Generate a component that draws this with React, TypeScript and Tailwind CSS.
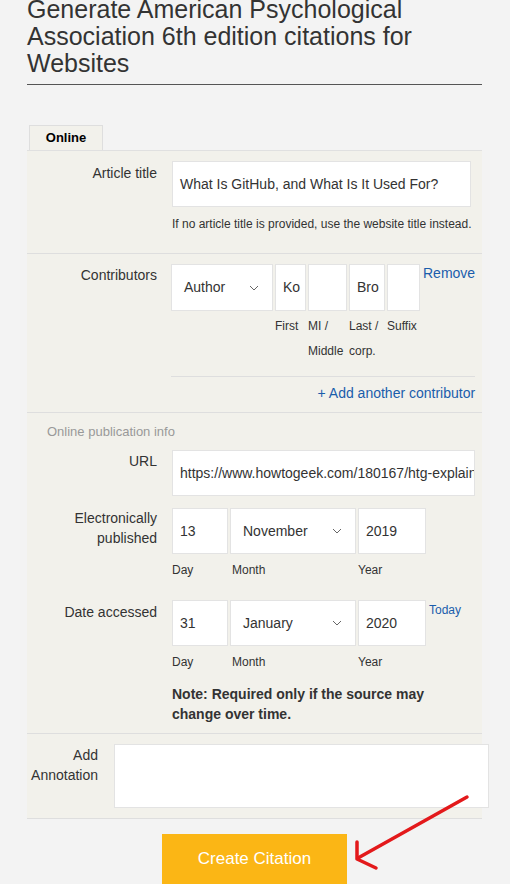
import React from 'react';

const Chevron: React.FC = () => (
  <svg width="10" height="6" viewBox="0 0 10 6" className="shrink-0">
    <path d="M1 1l4 4 4-4" fill="none" stroke="#666" strokeWidth="1" />
  </svg>
);

const Field: React.FC<{ value?: string; className: string }> = ({ value, className }) => (
  <div className={`bg-white border border-[#e3e3e3] flex items-center px-[7px] text-[14px] text-[#333] overflow-hidden whitespace-nowrap ${className}`}>
    {value}
  </div>
);

const Select: React.FC<{ value: string; className: string }> = ({ value, className }) => (
  <div className={`bg-white border border-[#e3e3e3] flex items-center justify-between pl-[12px] pr-[13px] text-[14px] text-[#333] ${className}`}>
    <span>{value}</span>
    <Chevron />
  </div>
);

const DateRow: React.FC<{ day: string; month: string; year: string }> = ({ day, month, year }) => (
  <div>
    <div className="flex gap-[2px] h-[46px]">
      <Field value={day} className="w-[56px] h-full" />
      <Select value={month} className="w-[126px] h-full" />
      <Field value={year} className="w-[68px] h-full" />
    </div>
    <div className="flex gap-[2px] pt-[4px] text-[12px] leading-[25px] text-[#333]">
      <span className="w-[56px]">Day</span>
      <span className="w-[126px] pl-[2px]">Month</span>
      <span className="w-[68px]">Year</span>
    </div>
  </div>
);

const Label: React.FC<{ children: React.ReactNode }> = ({ children }) => (
  <div className="w-[130px] shrink-0 text-right text-[14px] leading-[20px] text-[#333]">{children}</div>
);

const contributorFields = [
  { v: 'Ko', w: 'w-[31px]', l: 'First' },
  { v: '', w: 'w-[39px]', l: 'MI / Middle' },
  { v: 'Bro', w: 'w-[36px]', l: 'Last / corp.' },
  { v: '', w: 'w-[33px]', l: 'Suffix' },
];

export default function App() {
  return (
    <div className="min-h-screen bg-white" style={{ fontFamily: '"Liberation Sans", Arial, sans-serif' }}>
      <div className="w-[510px] min-h-[884px] bg-[#f3f3f3] relative overflow-hidden">
        <div className="pl-[27px] w-[455px] box-content">
          <h1 className="-mt-[4px] text-[25px] leading-[27px] text-[#333] pb-[7px] border-b border-[#555]">
            Generate American Psychological Association 6th edition citations for Websites
          </h1>

          <div className="mt-[40px] flex">
            <div className="ml-[2px] w-[74px] h-[25px] bg-[#f2f1eb] border border-b-0 border-[#dedede] flex items-center justify-center text-[13px] font-bold text-black">
              Online
            </div>
          </div>

          <div className="bg-[#f2f1eb] border-t border-[#e0e0e0] w-[455px] relative">
            {/* Article title */}
            <div className="flex gap-[15px] pt-[10px] pb-[21px] border-b border-[#dedede]">
              <div className="pt-[2px]"><Label>Article title</Label></div>
              <div>
                <Field value="What Is GitHub, and What Is It Used For?" className="w-[299px] h-[46px]" />
                <div className="mt-[10px] text-[12px] leading-[15px] text-[#333]">
                  If no article title is provided, use the website title instead.
                </div>
              </div>
            </div>

            {/* Contributors */}
            <div className="flex gap-[14px] pt-[10px] pb-[9px] border-b border-[#dedede]">
              <div className="pt-[1px]"><Label>Contributors</Label></div>
              <div className="flex-1 pr-[7px]">
                <div className="flex gap-[2px]">
                  <Select value="Author" className="w-[102px] h-[47px]" />
                  {contributorFields.map((c, i) => (
                    <div key={i} className={c.w}>
                      <Field value={c.v} className="w-full h-[47px]" />
                      <div className="text-[12px] leading-[25px] text-[#333] pt-[3px]">{c.l}</div>
                    </div>
                  ))}
                  <a className="ml-[1px] text-[14px] leading-[20px] text-[#1a5dab] -mt-[1px]">Remove</a>
                </div>
                <div className="mt-[12px] border-t border-[#dedede] pt-[6px] text-right text-[14px] leading-[20px] text-[#1a5dab]">
                  + Add another contributor
                </div>
              </div>
            </div>

            {/* Online publication info */}
            <div className="pt-[11px] pb-[9px] border-b border-[#dedede]">
              <div className="pl-[20px] text-[13px] leading-[16px] text-[#999]">Online publication info</div>
              <div className="flex gap-[15px] mt-[10px]">
                <div className="pt-[1px]"><Label>URL</Label></div>
                <Field value="https://www.howtogeek.com/180167/htg-explaining-what-is-github" className="w-[303px] h-[46px]" />
              </div>
              <div className="flex gap-[15px] mt-[12px]">
                <Label>Electronically<br />published</Label>
                <DateRow day="13" month="November" year="2019" />
              </div>
              <div className="flex gap-[15px] mt-[17px]">
                <div className="pt-[2px]"><Label>Date accessed</Label></div>
                <div>
                  <div className="flex">
                    <DateRow day="31" month="January" year="2020" />
                    <a className="ml-[3px] text-[12px] leading-[20px] text-[#1a5dab]">Today</a>
                  </div>
                  <div className="mt-[9px] text-[14px] leading-[20px] font-bold text-[#333] w-[265px]">
                    Note: Required only if the source may change over time.
                  </div>
                </div>
              </div>
            </div>

            {/* Annotation */}
            <div className="flex gap-[16px] pt-[10px] pb-[10px] border-b border-[#dedede]">
              <div className="w-[71px] shrink-0 text-right text-[14px] leading-[20px] text-[#333] pt-[1px]">
                Add<br />Annotation
              </div>
              <div className="w-[375px] h-[64px] bg-white border border-[#e3e3e3] shrink-0" />
            </div>
          </div>

          <div className="flex justify-center w-[455px] mt-[15px]">
            <button className="w-[185px] h-[50px] bg-[#fbb615] text-white text-[17px]">Create Citation</button>
          </div>
        </div>

        {/* red annotation arrow */}
        <svg className="absolute left-0 top-0 pointer-events-none" width="510" height="884">
          <g fill="none" stroke="#e3191b" strokeWidth="3.5" strokeLinecap="round" strokeLinejoin="round">
            <path d="M467 797 L358 858" />
            <path d="M357 842 L357 859 L376 868" />
          </g>
        </svg>
      </div>
    </div>
  );
}
